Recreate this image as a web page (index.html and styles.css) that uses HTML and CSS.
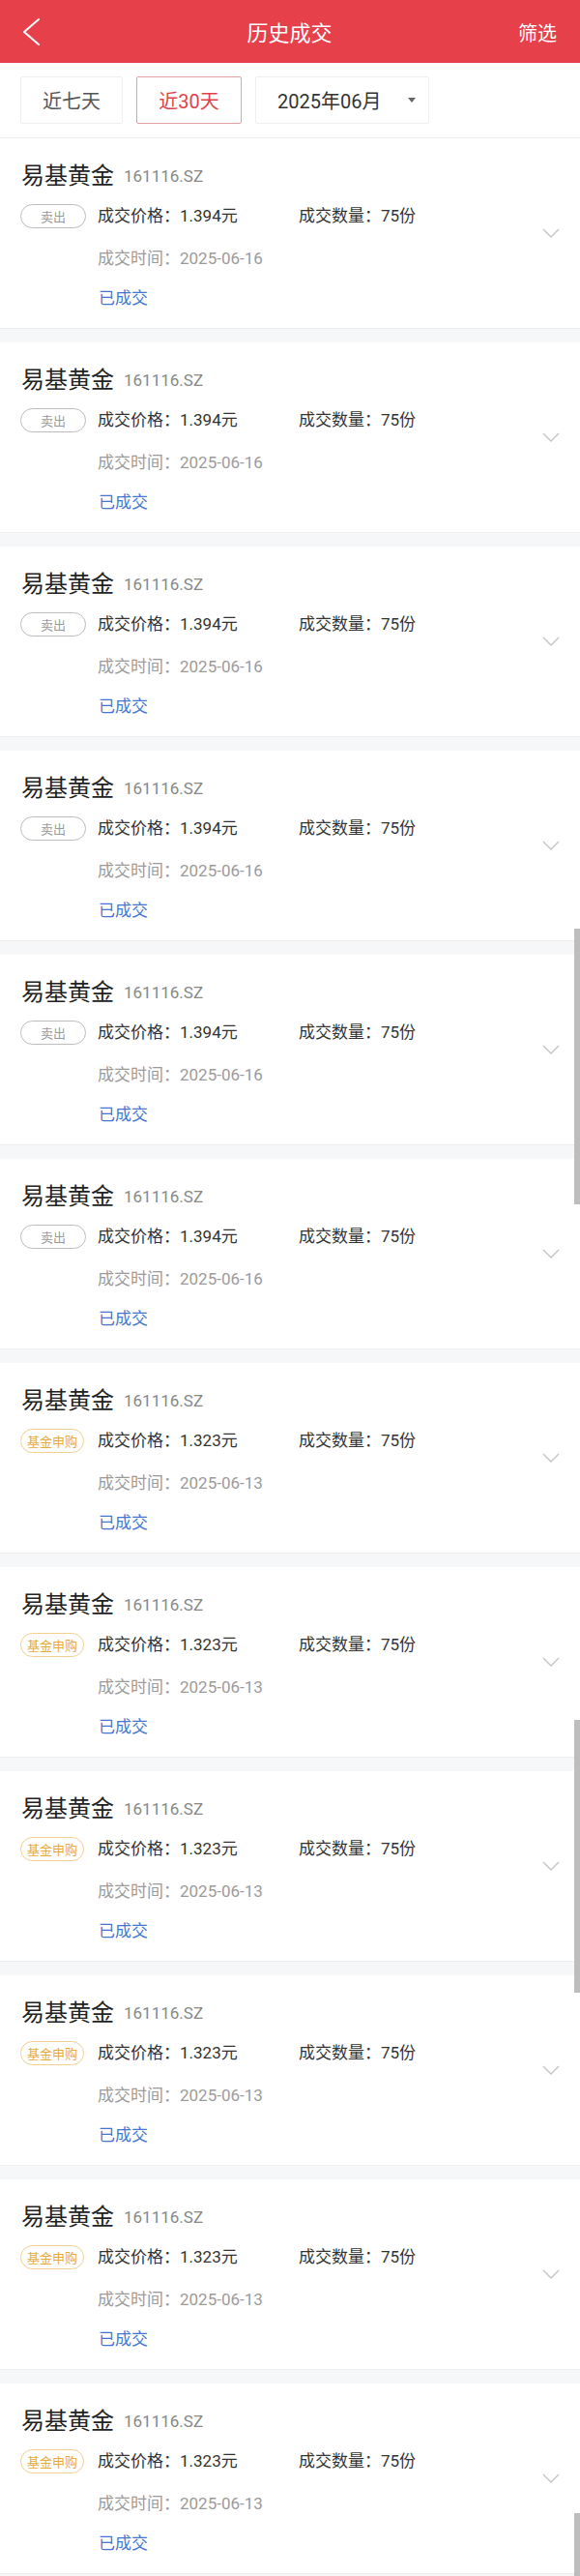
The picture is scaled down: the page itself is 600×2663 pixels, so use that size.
FILE: index.html
```html
<!DOCTYPE html>
<html lang="zh-CN">
<head>
<meta charset="utf-8">
<title>历史成交</title>
<link rel="stylesheet" href="styles.css">
</head>
<body>
<header class="topbar">
  <span class="back"><svg width="20" height="30" viewBox="0 0 20 30"><polyline points="17,2 2,15 17,28" fill="none" stroke="#fff" stroke-width="2" stroke-linecap="round" stroke-linejoin="round"/></svg></span>
  <h1 class="title">历史成交</h1>
  <span class="filter">筛选</span>
</header>
<div class="filters">
  <span class="fbtn">近七天</span>
  <span class="fbtn active">近30天</span>
  <span class="fbtn month">2025年06月<i class="tri"></i></span>
</div>
<div class="list">
  <div class="card"><div class="main"><div class="name">易基黄金<span class="code">161116.SZ</span></div><div class="r1"><span class="tag sell">卖出</span><span class="price">成交价格：1.394元</span><span class="qty">成交数量：75份</span></div><div class="r2">成交时间：2025-06-16</div><div class="r3">已成交</div></div><svg class="chev" width="18" height="10" viewBox="0 0 18 10"><polyline points="1,1 9,9 17,1" fill="none" stroke="#c4c4c4" stroke-width="1.4"/></svg></div>
  <div class="card"><div class="main"><div class="name">易基黄金<span class="code">161116.SZ</span></div><div class="r1"><span class="tag sell">卖出</span><span class="price">成交价格：1.394元</span><span class="qty">成交数量：75份</span></div><div class="r2">成交时间：2025-06-16</div><div class="r3">已成交</div></div><svg class="chev" width="18" height="10" viewBox="0 0 18 10"><polyline points="1,1 9,9 17,1" fill="none" stroke="#c4c4c4" stroke-width="1.4"/></svg></div>
  <div class="card"><div class="main"><div class="name">易基黄金<span class="code">161116.SZ</span></div><div class="r1"><span class="tag sell">卖出</span><span class="price">成交价格：1.394元</span><span class="qty">成交数量：75份</span></div><div class="r2">成交时间：2025-06-16</div><div class="r3">已成交</div></div><svg class="chev" width="18" height="10" viewBox="0 0 18 10"><polyline points="1,1 9,9 17,1" fill="none" stroke="#c4c4c4" stroke-width="1.4"/></svg></div>
  <div class="card"><div class="main"><div class="name">易基黄金<span class="code">161116.SZ</span></div><div class="r1"><span class="tag sell">卖出</span><span class="price">成交价格：1.394元</span><span class="qty">成交数量：75份</span></div><div class="r2">成交时间：2025-06-16</div><div class="r3">已成交</div></div><svg class="chev" width="18" height="10" viewBox="0 0 18 10"><polyline points="1,1 9,9 17,1" fill="none" stroke="#c4c4c4" stroke-width="1.4"/></svg></div>
  <div class="card"><div class="main"><div class="name">易基黄金<span class="code">161116.SZ</span></div><div class="r1"><span class="tag sell">卖出</span><span class="price">成交价格：1.394元</span><span class="qty">成交数量：75份</span></div><div class="r2">成交时间：2025-06-16</div><div class="r3">已成交</div></div><svg class="chev" width="18" height="10" viewBox="0 0 18 10"><polyline points="1,1 9,9 17,1" fill="none" stroke="#c4c4c4" stroke-width="1.4"/></svg></div>
  <div class="card"><div class="main"><div class="name">易基黄金<span class="code">161116.SZ</span></div><div class="r1"><span class="tag sell">卖出</span><span class="price">成交价格：1.394元</span><span class="qty">成交数量：75份</span></div><div class="r2">成交时间：2025-06-16</div><div class="r3">已成交</div></div><svg class="chev" width="18" height="10" viewBox="0 0 18 10"><polyline points="1,1 9,9 17,1" fill="none" stroke="#c4c4c4" stroke-width="1.4"/></svg></div>
  <div class="card"><div class="main"><div class="name">易基黄金<span class="code">161116.SZ</span></div><div class="r1"><span class="tag buy">基金申购</span><span class="price">成交价格：1.323元</span><span class="qty">成交数量：75份</span></div><div class="r2">成交时间：2025-06-13</div><div class="r3">已成交</div></div><svg class="chev" width="18" height="10" viewBox="0 0 18 10"><polyline points="1,1 9,9 17,1" fill="none" stroke="#c4c4c4" stroke-width="1.4"/></svg></div>
  <div class="card"><div class="main"><div class="name">易基黄金<span class="code">161116.SZ</span></div><div class="r1"><span class="tag buy">基金申购</span><span class="price">成交价格：1.323元</span><span class="qty">成交数量：75份</span></div><div class="r2">成交时间：2025-06-13</div><div class="r3">已成交</div></div><svg class="chev" width="18" height="10" viewBox="0 0 18 10"><polyline points="1,1 9,9 17,1" fill="none" stroke="#c4c4c4" stroke-width="1.4"/></svg></div>
  <div class="card"><div class="main"><div class="name">易基黄金<span class="code">161116.SZ</span></div><div class="r1"><span class="tag buy">基金申购</span><span class="price">成交价格：1.323元</span><span class="qty">成交数量：75份</span></div><div class="r2">成交时间：2025-06-13</div><div class="r3">已成交</div></div><svg class="chev" width="18" height="10" viewBox="0 0 18 10"><polyline points="1,1 9,9 17,1" fill="none" stroke="#c4c4c4" stroke-width="1.4"/></svg></div>
  <div class="card"><div class="main"><div class="name">易基黄金<span class="code">161116.SZ</span></div><div class="r1"><span class="tag buy">基金申购</span><span class="price">成交价格：1.323元</span><span class="qty">成交数量：75份</span></div><div class="r2">成交时间：2025-06-13</div><div class="r3">已成交</div></div><svg class="chev" width="18" height="10" viewBox="0 0 18 10"><polyline points="1,1 9,9 17,1" fill="none" stroke="#c4c4c4" stroke-width="1.4"/></svg></div>
  <div class="card"><div class="main"><div class="name">易基黄金<span class="code">161116.SZ</span></div><div class="r1"><span class="tag buy">基金申购</span><span class="price">成交价格：1.323元</span><span class="qty">成交数量：75份</span></div><div class="r2">成交时间：2025-06-13</div><div class="r3">已成交</div></div><svg class="chev" width="18" height="10" viewBox="0 0 18 10"><polyline points="1,1 9,9 17,1" fill="none" stroke="#c4c4c4" stroke-width="1.4"/></svg></div>
  <div class="card"><div class="main"><div class="name">易基黄金<span class="code">161116.SZ</span></div><div class="r1"><span class="tag buy">基金申购</span><span class="price">成交价格：1.323元</span><span class="qty">成交数量：75份</span></div><div class="r2">成交时间：2025-06-13</div><div class="r3">已成交</div></div><svg class="chev" width="18" height="10" viewBox="0 0 18 10"><polyline points="1,1 9,9 17,1" fill="none" stroke="#c4c4c4" stroke-width="1.4"/></svg></div>
</div>
<div class="sbar s1"></div>
<div class="sbar s2"></div>
<div class="sbar s3"></div>
</body>
</html>
```
FILE: styles.css
```css
* { box-sizing: border-box; }
html, body { margin: 0; padding: 0; }
body {
  width: 600px;
  background: #f6f7f9;
  font-family: Roboto, "Noto Sans CJK SC", sans-serif;
  color: #222;
  position: relative;
  overflow: hidden;
  height: 2663px;
}
.topbar {
  height: 65px;
  background: #e6404a;
  display: flex;
  align-items: center;
  justify-content: space-between;
  padding: 0 24px 0 23px;
  color: #fff;
}
.back { width: 60px; display: flex; align-items: center; height: 30px; }
.back svg { display: block; }
.title {
  margin: 0;
  font-size: 22px;
  font-weight: 400;
  line-height: 30px;
  padding-top: 4px;
}
.filter {
  width: 60px;
  text-align: right;
  font-size: 20px;
  line-height: 30px;
  padding-top: 4px;
}
.filters {
  height: 78px;
  background: #fff;
  border-bottom: 1px solid #ececec;
  display: flex;
  align-items: flex-start;
  padding: 14px 0 0 21px;
  gap: 14px;
}
.fbtn {
  height: 49px;
  border: 1px solid #efefef;
  border-radius: 2px;
  display: flex;
  align-items: center;
  font-size: 20px;
  color: #555;
  padding: 0 22px;
  width: 106px;
  justify-content: center;
}
.fbtn.active {
  color: #e0424a;
  border-color: #e2a2a5;
  width: 109px;
}
.fbtn.month {
  width: 180px;
  justify-content: flex-start;
  color: #333;
  position: relative;
}
.tri {
  width: 0; height: 0;
  border-left: 4px solid transparent;
  border-right: 4px solid transparent;
  border-top: 5px solid #666;
  margin-left: auto;
  margin-right: -9px;
}
.list { background: #f6f7f9; }
.card {
  background: #fff;
  height: 197px;
  border-bottom: 1px solid #eeeeee;
  margin-bottom: 14px;
  display: flex;
  align-items: center;
  padding: 0 21px 0 21px;
}
.main { flex: 1; align-self: stretch; }
.name {
  margin-top: 24px;
  height: 30px;
  line-height: 30px;
  font-size: 24px;
  color: #222;
  padding-left: 1px;
  display: flex;
  align-items: center;
}
.code {
  font-size: 17px;
  color: #888;
  margin-left: 10px;
  line-height: 30px;
}
.r1 {
  margin-top: 13px;
  height: 26px;
  display: flex;
  align-items: center;
  font-size: 17px;
  color: #333;
}
.tag {
  width: 68px;
  height: 25px;
  border-radius: 13px;
  border: 1px solid #bdbdbd;
  font-size: 13px;
  color: #9a9a9a;
  display: flex;
  align-items: center;
  justify-content: center;
  margin-right: 12px;
  flex: none;
}
.tag.buy {
  width: 66px;
  border-color: #f1d08f;
  color: #e9a93a;
  margin-right: 14px;
}
.price { width: 208px; line-height: 26px; }
.qty { line-height: 26px; }
.r2 {
  margin-top: 18px;
  height: 26px;
  line-height: 26px;
  font-size: 17px;
  color: #9b9b9b;
  padding-left: 80px;
}
.r3 {
  margin-top: 15px;
  height: 26px;
  line-height: 26px;
  font-size: 17px;
  color: #4477d2;
  padding-left: 81px;
}
.chev { display: block; flex: none; margin-right: 0; }
.sbar {
  position: absolute;
  right: 0;
  width: 6px;
  background: #bdbdbd;
}
.s1 { top: 960px; height: 285px; }
.s2 { top: 1778px; height: 282px; }
.s3 { top: 2598px; height: 65px; }
```
